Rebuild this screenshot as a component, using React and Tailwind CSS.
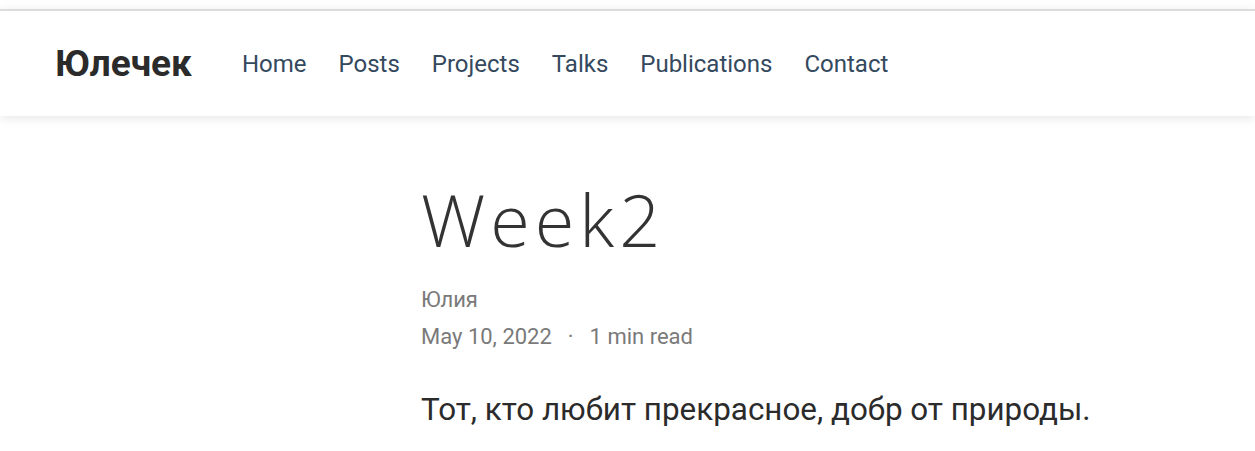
import React from "react";

const links = ["Home", "Posts", "Projects", "Talks", "Publications", "Contact"];

export default function App() {
  return (
    <div className="min-h-screen bg-white pt-[9px] font-['Roboto',sans-serif]">
      {/* Header */}
      <header className="border-t-2 border-[#dcdcdc] bg-white shadow-[0_2px_10px_rgba(0,0,0,0.1)]">
        <div className="flex h-[105px] items-center pl-[55px]">
          <a className="text-[37px] font-bold text-[#2b2b2b] leading-none">Юлечек</a>
          <nav className="ml-[50px] flex items-center gap-[32px]">
            {links.map((l) => (
              <a key={l} className="text-[24px] text-[#34495e] leading-none">
                {l}
              </a>
            ))}
          </nav>
        </div>
      </header>

      {/* Post */}
      <main className="pl-[421px] pt-[67px]">
        <h1 className="font-['Open_Sans',sans-serif] text-[72px] font-[350] leading-none tracking-[5px] text-[#333]">
          Week2
        </h1>
        <div className="mt-[28px] text-[22px] leading-[33px] text-[#7a7a7a]">Юлия</div>
        <div className="mt-[4px] flex items-center text-[22px] leading-[33px] text-[#7a7a7a]">
          <span>May 10, 2022</span>
          <span className="mx-[16px]">·</span>
          <span>1 min read</span>
        </div>
        <p className="mt-[34px] text-[31.4px] leading-[46px] text-[#2b2b2b]">
          Тот, кто любит прекрасное, добр от природы.
        </p>
      </main>
    </div>
  );
}
